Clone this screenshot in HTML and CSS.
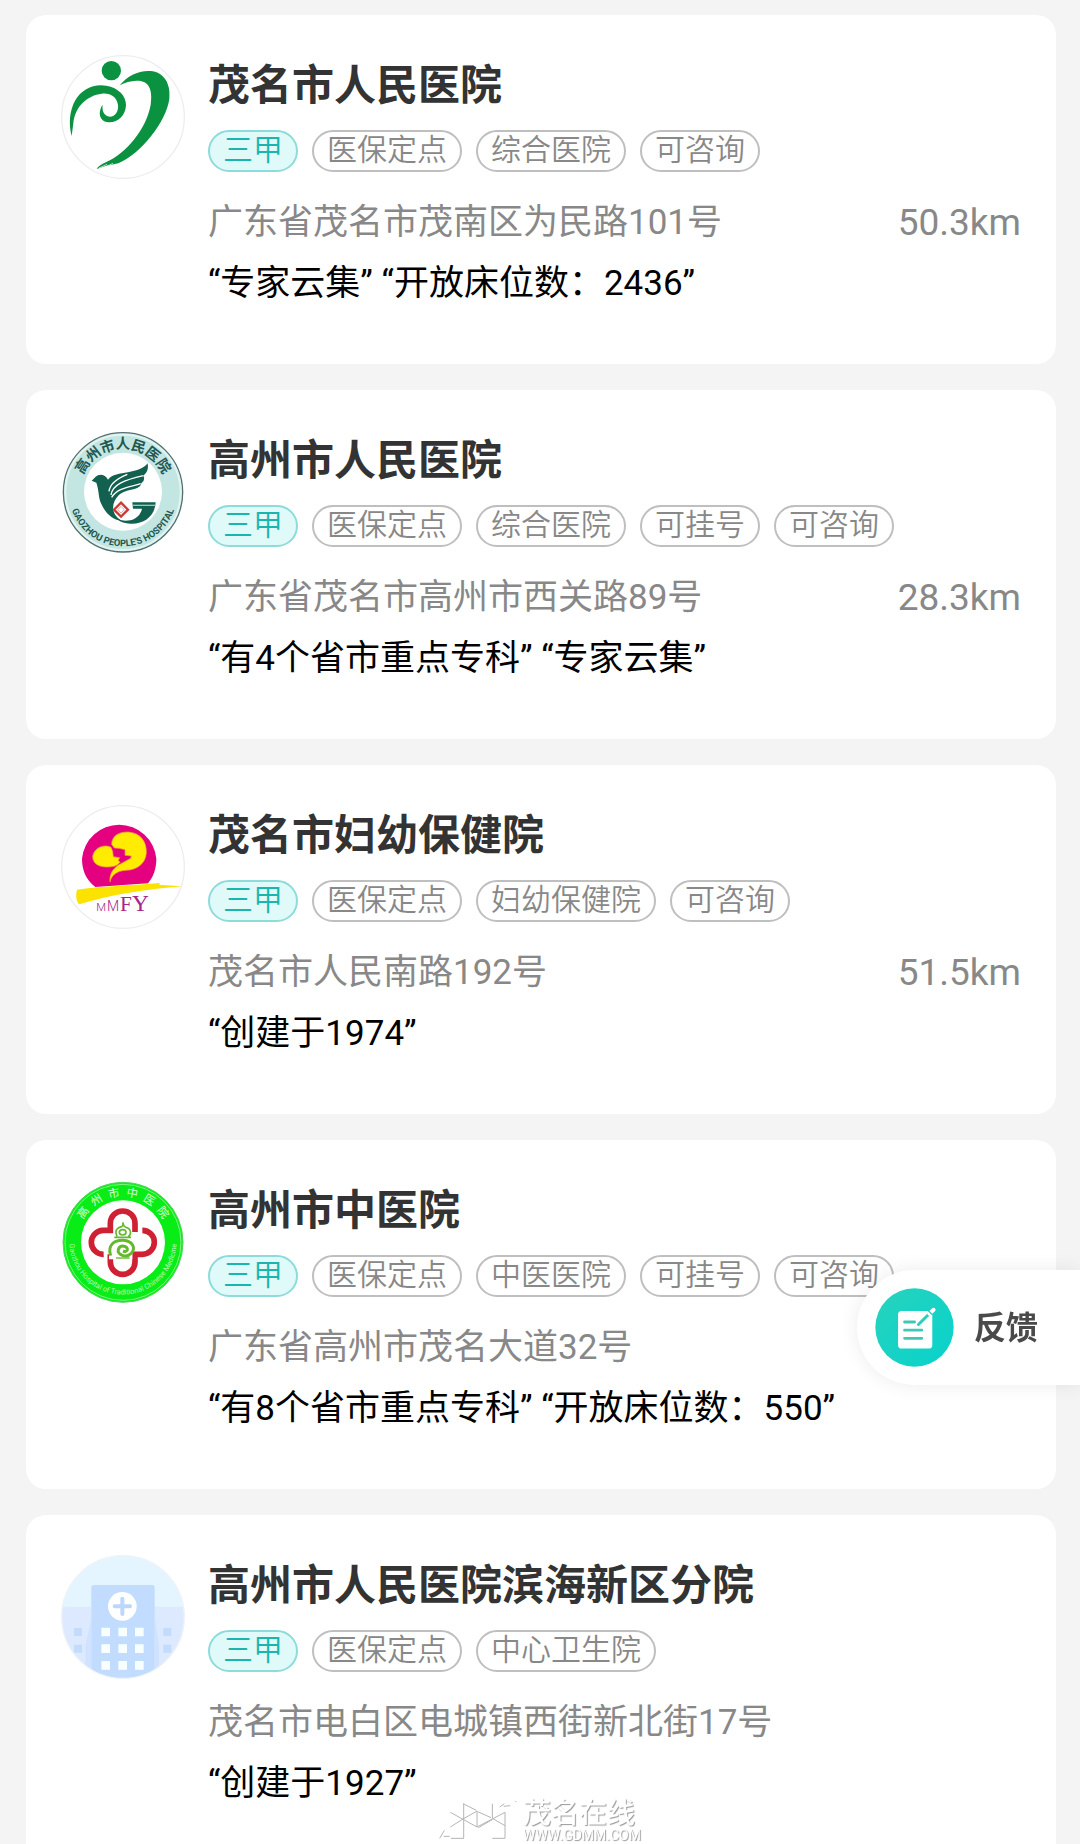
FILE: index.html
```html
<!DOCTYPE html>
<html lang="zh-CN">
<head>
<meta charset="utf-8">
<meta name="viewport" content="width=device-width, initial-scale=1">
<title>医院列表</title>
<link rel="stylesheet" href="styles.css">
</head>
<body>
<main class="list">
  <article class="card">
    <svg class="logo" viewBox="36 45 372 372" aria-hidden="true">
      <circle cx="222" cy="231" r="184" fill="#fff" stroke="#ededed" stroke-width="4"/>
      <g fill="#0b9240">
        <circle cx="187" cy="92" r="29"/>
        <path d="M68 288C58 250 62 212 78 182C98 146 136 130 172 137C208 143 232 168 231 196C230 226 207 248 180 247C158 246 148 228 154 209Q156 200 161 194C158 213 166 228 182 230C200 230 209 213 207 195C203 170 184 158 158 161C116 166 78 198 73 250Z"/>
        <path d="M212 136C236 107 268 91 304 93C344 96 366 130 361 176C352 246 276 340 208 370L170 378L143 387Q148 376 172 366C230 340 292 268 305 194C312 146 298 120 262 122Q236 123 212 136Z"/>
      </g>
      <path d="M150 384L174 373M166 382L192 370" stroke="#fff" stroke-width="2"/>
    </svg>
    <div class="info">
      <h2 class="name">茂名市人民医院</h2>
      <ul class="tags"><li class="tag tag-level">三甲</li><li class="tag">医保定点</li><li class="tag">综合医院</li><li class="tag">可咨询</li></ul>
      <div class="place"><span>广东省茂名市茂南区为民路101号</span><span class="distance">50.3km</span></div>
      <p class="notes">“专家云集” “开放床位数：2436”</p>
    </div>
  </article>

  <article class="card">
    <svg class="logo" viewBox="36 30 372 372" aria-hidden="true">
      <defs>
        <path id="gz-top" d="M92 217A130 130 0 0 1 352 217"/>
        <path id="gz-bottom" d="M60 217A162 162 0 0 0 384 217"/>
      </defs>
      <circle cx="222" cy="217" r="179" fill="#c3e6e3" stroke="#54706e" stroke-width="4"/>
      <circle cx="222" cy="217" r="173" fill="none" stroke="#e2f4f2" stroke-width="6"/>
      <circle cx="222" cy="215" r="117" fill="#fff"/>
      <text class="seal-cn seal-dark"><textPath href="#gz-top" startOffset="50%" text-anchor="middle">高州市人民医院</textPath></text>
      <text class="seal-en seal-dark"><textPath href="#gz-bottom" startOffset="50%" text-anchor="middle">GAOZHOU PEOPLE'S HOSPITAL</textPath></text>
      <path fill="#12604f" d="M128 182L140 170C150 160 169 162 177 179C190 163 212 161 237 157C264 152 285 145 296 130C299 150 292 160 283 167Q290 181 277 190Q275 203 256 207C239 211 220 215 209 226C194 241 187 262 197 282Q206 297 221 303C190 301 168 278 156 250C148 230 150 210 142 188Z"/>
      <path fill="none" stroke="#fff" stroke-width="4" d="M186 225C190 195 225 180 283 167M188 232C205 204 240 202 275 191M180 214C183 190 202 176 235 163"/>
      <path fill="#12604f" d="M250 247H320C318 286 288 313 244 311Q220 311 205 298Q225 305 244 301C262 296 275 284 279 266H252Z"/>
      <path d="M252 256H319" stroke="#9ac9bf" stroke-width="4"/>
      <path d="M216 248L237 269L216 290L195 269Z" fill="#fff" stroke="#c83c38" stroke-width="7"/>
      <path d="M216 259L226 269L216 279L206 269Z" fill="none" stroke="#e8a8a2" stroke-width="3"/>
    </svg>
    <div class="info">
      <h2 class="name">高州市人民医院</h2>
      <ul class="tags"><li class="tag tag-level">三甲</li><li class="tag">医保定点</li><li class="tag">综合医院</li><li class="tag">可挂号</li><li class="tag">可咨询</li></ul>
      <div class="place"><span>广东省茂名市高州市西关路89号</span><span class="distance">28.3km</span></div>
      <p class="notes">“有4个省市重点专科” “专家云集”</p>
    </div>
  </article>

  <article class="card">
    <svg class="logo" viewBox="36 30 372 372" aria-hidden="true">
      <circle cx="222" cy="216" r="184" fill="#fff" stroke="#ededed" stroke-width="4"/>
      <path fill="#e5007f" d="M139 276C109 252 99 223 99 191A112 112 0 0 1 322 191C322 222 313 245 297 265Z"/>
      <path fill="#ffec00" stroke="#f39a3c" stroke-width="2" d="M188 148C188 122 211 110 238 111C274 113 294 140 292 174C290 206 264 225 231 226C203 228 188 240 183 261C181 237 191 223 207 211L245 190L247 183L228 181V164L210 160L196 159Z"/>
      <path fill="#ffec00" stroke="#f39a3c" stroke-width="2" d="M186 157C167 146 135 157 131 184C130 208 155 218 177 216C197 216 207 210 213 202L208 196L212 188L193 185L191 169Z"/>
      <path fill="#fbe200" d="M84 284C170 272 260 271 333 264L330 269L399 274C300 282 190 298 91 328C80 317 80 298 84 284Z"/>
      <g fill="#a42487" class="mmfy"><text class="mm" x="142" y="348" font-size="34">M</text><text class="mm" x="174" y="348" font-size="42">M</text><text x="213" y="348" font-size="64">F</text><text x="249" y="348" font-size="70">Y</text></g>
    </svg>
    <div class="info">
      <h2 class="name">茂名市妇幼保健院</h2>
      <ul class="tags"><li class="tag tag-level">三甲</li><li class="tag">医保定点</li><li class="tag">妇幼保健院</li><li class="tag">可咨询</li></ul>
      <div class="place"><span>茂名市人民南路192号</span><span class="distance">51.5km</span></div>
      <p class="notes">“创建于1974”</p>
    </div>
  </article>

  <article class="card">
    <svg class="logo" viewBox="36 30 372 372" aria-hidden="true">
      <defs>
        <path id="tcm-top" d="M84 217A138 138 0 0 1 360 217"/>
        <path id="tcm-bottom" d="M62 195A161 161 0 1 0 382 195"/>
      </defs>
      <circle cx="222" cy="217" r="180" fill="#09ed16" stroke="#50d75d" stroke-width="3"/>
      <circle cx="222" cy="217" r="174" fill="none" stroke="#baf8bd" stroke-width="2"/>
      <circle cx="222" cy="217" r="126" fill="#fff"/>
      <text class="seal-script"><textPath href="#tcm-top" startOffset="50%" text-anchor="middle">高&#8194;州&#8194;市&#8194;中&#8194;医&#8194;院</textPath></text>
      <text class="seal-small"><textPath href="#tcm-bottom" startOffset="50%" text-anchor="middle">Gaozhou Hospital of Traditional Chinese Medicine</textPath></text>
      <path fill="none" stroke="#cf2034" stroke-width="17" d="M184 190V160A37 37 0 0 1 258 160V186M280 181A36 36 0 0 1 280 253H258V276A37 37 0 0 1 184 276V253M164 253A36 36 0 0 1 162 181H192"/>
      <path d="M180 207V268H250V200H195Z" fill="#fff"/>
      <g fill="none" stroke="#66b82e">
        <path stroke-width="5" d="M204 199C194 177 210 172 218 170Q223 167 222 157Q222 169 231 172C247 176 248 193 238 200M196 202H246"/>
        <ellipse cx="221" cy="187" rx="10" ry="8" stroke-width="5"/>
        <path stroke-width="9" d="M185 257C174 222 199 210 223 211C251 213 261 234 247 250C232 266 203 254 208 238C214 223 237 227 235 240Q232 247 222 243"/>
      </g>
      <path d="M201 264H242" stroke="#66b82e" stroke-width="4"/>
    </svg>
    <div class="info">
      <h2 class="name">高州市中医院</h2>
      <ul class="tags"><li class="tag tag-level">三甲</li><li class="tag">医保定点</li><li class="tag">中医医院</li><li class="tag">可挂号</li><li class="tag">可咨询</li></ul>
      <div class="place"><span>广东省高州市茂名大道32号</span></div>
      <p class="notes">“有8个省市重点专科” “开放床位数：550”</p>
    </div>
  </article>

  <article class="card">
    <svg class="logo" viewBox="36 30 372 372" aria-hidden="true">
      <defs><clipPath id="round"><circle cx="222" cy="216" r="184"/></clipPath></defs>
      <g clip-path="url(#round)">
        <path fill="#e5f5ff" d="M30 20H410V410H30Z"/>
        <path fill="#dce9ff" d="M30 185H410V410H30Z"/>
        <path fill="#c2dcff" d="M127 402V128Q127 120 135 120H309Q317 120 317 128V402Z"/>
        <path fill="#cfe2ff" d="M110 300L127 220V402H110ZM317 220L330 300V402H317Z"/>
        <circle cx="220" cy="184" r="43" fill="#fff"/>
        <path d="M220 161V207M197 184H243" stroke="#bcd7fc" stroke-width="12" stroke-linecap="round"/>
        <path fill="#f7ffff" d="M157 248h26v26h-26zM208 248h26v26h-26zM258 248h26v26h-26zM157 298h26v26h-26zM208 298h26v26h-26zM258 298h26v26h-26zM157 348h26v26h-26zM208 348h26v26h-26zM258 348h26v26h-26z"/>
        <path fill="#c4dcfb" d="M75 249h24v24h-24zM343 249h24v24h-24zM75 299h24v24h-24zM343 299h24v24h-24z"/>
      </g>
      <circle cx="222" cy="216" r="184" fill="none" stroke="#edf3f8" stroke-width="4"/>
    </svg>
    <div class="info">
      <h2 class="name">高州市人民医院滨海新区分院</h2>
      <ul class="tags"><li class="tag tag-level">三甲</li><li class="tag">医保定点</li><li class="tag">中心卫生院</li></ul>
      <div class="place"><span>茂名市电白区电城镇西街新北街17号</span></div>
      <p class="notes">“创建于1927”</p>
    </div>
  </article>
</main>

<button class="feedback" type="button">
  <svg class="feedback-icon" viewBox="0 0 240 240" aria-hidden="true">
    <defs><linearGradient id="teal" x1="0" y1="0" x2="1" y2="1"><stop offset="0" stop-color="#27d3bd"/><stop offset="1" stop-color="#08d2cc"/></linearGradient></defs>
    <circle cx="120" cy="120" r="119" fill="url(#teal)"/>
    <rect x="70" y="70" width="104" height="114" rx="11" fill="#fff"/>
    <path d="M90 103H120M90 128H142M90 153H142" stroke="#42c7b5" stroke-width="9" stroke-linecap="round"/>
    <path d="M132 111L165 78" stroke="#2ccdbb" stroke-width="9" stroke-linecap="round"/>
    <path d="M165 78L178 66" stroke="#fff" stroke-width="12" stroke-linecap="round"/>
    <path d="M162 69L174 81" stroke="#2ccdbb" stroke-width="4"/>
  </svg>
  <span class="feedback-label">反馈</span>
</button>

<div class="watermark">
  <svg class="watermark-mark" viewBox="0 0 234 120" aria-hidden="true">
    <path fill="none" stroke="#fff" stroke-width="5" d="M34 30L70 50L110 28M74 8V110H36M34 74L114 30V76L74 50M114 76L196 32V110H158M158 8V50L196 70M114 30L158 52M184 14L212 10M6 110L28 90"/>
    <path fill="none" stroke="#b4b4b4" stroke-width="3" d="M34 34L114 78L198 34V112H160M34 78L72 54L114 30V78M74 8V112H36M160 8V52L198 74M118 80L160 56M116 32L156 50M72 8L112 28M182 18L196 8M194 16L214 14M228 0L232 2M2 112L16 88M14 106L32 106"/>
  </svg>
  <div class="watermark-text"><span class="watermark-name">茂名在线</span><span class="watermark-url">WWW.GDMM.COM</span></div>
</div>
</body>
</html>
```
FILE: styles.css
```css
* {
  box-sizing: border-box;
}

body {
  margin: 0;
  background: #f4f4f4;
  color: #000;
  font-family: Roboto, "Noto Sans CJK SC", sans-serif;
}

.list {
  display: flex;
  flex-direction: column;
  gap: 26px;
  height: 100vh;
  padding: 15px 24px 26px 26px;
  overflow-y: auto;
  scrollbar-width: none;
}

.card {
  display: flex;
  flex-shrink: 0;
  gap: 23px;
  padding: 40px 35px 55px;
  border-radius: 20px;
  background: #fff;
}

.logo {
  flex: none;
  width: 124px;
  height: 124px;
}

.info {
  flex: 1;
  min-width: 0;
}

.name {
  margin: 0;
  color: #333;
  font-size: 42px;
  font-weight: 700;
  line-height: 62px;
}

.tags {
  display: flex;
  flex-wrap: wrap;
  gap: 14px;
  margin: 13px 0 26px;
  padding: 0;
  list-style: none;
}

.tag {
  height: 42px;
  padding: 0 13px;
  border: 2px solid #bfbfbf;
  border-radius: 21px;
  color: #888;
  font-size: 30px;
  font-weight: 350;
  line-height: 36px;
}

.tag-level {
  border-color: #8edcda;
  background: #e0fafa;
  color: #1bb5b0;
}

.place {
  display: flex;
  justify-content: space-between;
  color: #888;
  font-size: 35px;
  line-height: 50px;
}

.distance {
  font-size: 37px;
}

.notes {
  margin: 11px 0 0;
  font-size: 35px;
  line-height: 50px;
}

.seal-dark {
  fill: #24584f;
  font-weight: 700;
}

.seal-cn {
  font-size: 43px;
}

.seal-en {
  font-size: 28px;
}

.seal-script {
  fill: #d9ffd9;
  font-size: 34px;
}

.seal-small {
  fill: #b5f7ae;
  font-size: 22px;
}

.mmfy {
  font-family: "Liberation Serif", serif;
}

.mm {
  font-family: Roboto, sans-serif;
  font-weight: 300;
}

.feedback {
  position: fixed;
  right: 0;
  bottom: 459px;
  display: flex;
  align-items: center;
  gap: 20px;
  height: 115px;
  padding: 0 42px 0 18px;
  border: 0;
  border-radius: 58px 0 0 58px;
  background: #fff;
  box-shadow: 0 0 20px rgba(0, 0, 0, 0.08);
  color: #4a4a4a;
  font-family: inherit;
  font-size: 32px;
  font-weight: 700;
}

.feedback-icon {
  width: 79px;
  height: 79px;
}

.feedback-label {
  padding-bottom: 6px;
}

.watermark {
  position: fixed;
  bottom: 2px;
  left: 50%;
  display: flex;
  align-items: center;
  gap: 6px;
  transform: translateX(-50%);
  color: #fff;
  text-shadow: 1px 1px 1px #999;
}

.watermark-mark {
  width: 78px;
  height: 40px;
}

.watermark-text {
  display: flex;
  flex-direction: column;
}

.watermark-name {
  font-size: 28px;
  font-weight: 500;
  line-height: 28px;
}

.watermark-url {
  font-size: 14px;
  line-height: 14px;
}
```
